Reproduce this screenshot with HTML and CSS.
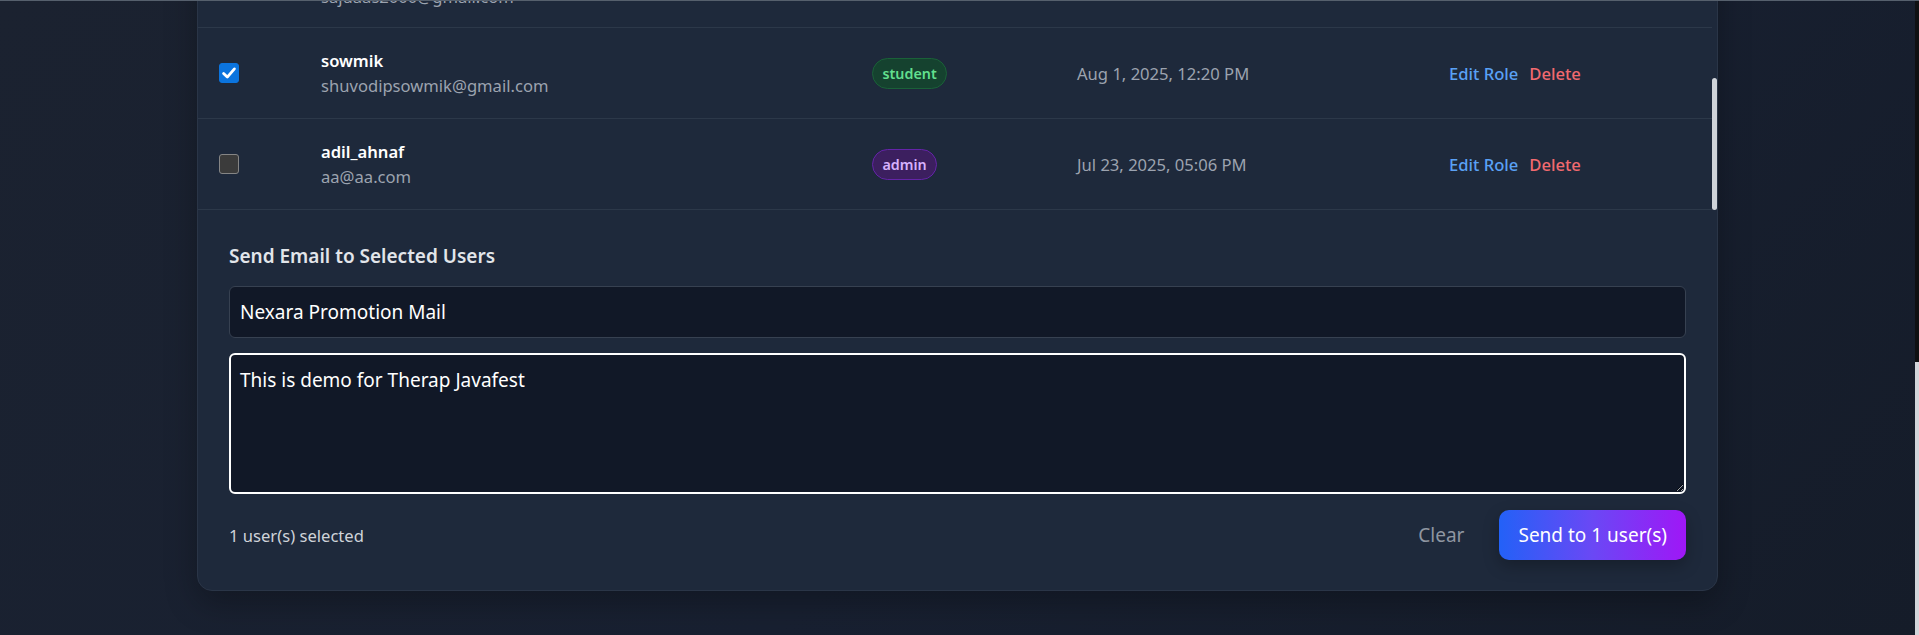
FILE: index.html
```html
<!DOCTYPE html>
<html lang="en">
<head>
<meta charset="utf-8">
<title>Users - Send Email</title>
<link rel="stylesheet" href="styles.css">
</head>
<body>
<div class="page">
  <main class="main">
    <section class="card">
      <div class="table-wrap">
        <div class="rows">
          <div class="row row-cut">
            <div class="cell cell-check"><span class="cb"></span></div>
            <div class="cell user">
              <span class="name">sajidas</span>
              <span class="email">sajuaas2000@gmail.com</span>
            </div>
            <div class="cell"></div>
            <div class="cell"></div>
            <div class="cell"></div>
          </div>
          <div class="row">
            <div class="cell cell-check">
              <span class="cb on"><svg viewBox="0 0 20 20" width="20" height="20"><path d="M4.6 10.4 L8.3 14.1 L15.4 5.9" fill="none" stroke="#fff" stroke-width="2.8" stroke-linecap="round" stroke-linejoin="round"/></svg></span>
            </div>
            <div class="cell user">
              <span class="name">sowmik</span>
              <span class="email">shuvodipsowmik@gmail.com</span>
            </div>
            <div class="cell"><span class="badge student">student</span></div>
            <div class="cell date">Aug 1, 2025, 12:20 PM</div>
            <div class="cell acts"><a class="edit">Edit Role</a><a class="del">Delete</a></div>
          </div>
          <div class="row">
            <div class="cell cell-check"><span class="cb"></span></div>
            <div class="cell user">
              <span class="name">adil_ahnaf</span>
              <span class="email">aa@aa.com</span>
            </div>
            <div class="cell"><span class="badge admin">admin</span></div>
            <div class="cell date">Jul 23, 2025, 05:06 PM</div>
            <div class="cell acts"><a class="edit">Edit Role</a><a class="del">Delete</a></div>
          </div>
        </div>
        <div class="vscroll"><div class="vthumb"></div></div>
      </div>

      <div class="mailer">
        <h3 class="mailer-title">Send Email to Selected Users</h3>
        <input class="field" type="text" value="Nexara Promotion Mail">
        <textarea class="field area">This is demo for Therap Javafest</textarea>
        <div class="footer">
          <span class="count">1 user(s) selected</span>
          <div class="buttons">
            <button class="btn-clear" type="button">Clear</button>
            <button class="btn-send" type="button">Send to 1 user(s)</button>
          </div>
        </div>
      </div>
    </section>
  </main>
  <div class="page-scroll"><div class="page-thumb"></div></div>
</div>
</body>
</html>
```

FILE: styles.css
```css
* { box-sizing: border-box; }

html, body {
  margin: 0;
  padding: 0;
  height: 635px;
  overflow: hidden;
}

body {
  font-family: "Noto Sans", "Open Sans", "Liberation Sans", sans-serif;
  background: linear-gradient(135deg, #1b2230 0%, #182031 55%, #151c29 100%);
  color: #e5e7eb;
}

.page {
  display: flex;
  height: 635px;
  border-top: 1px solid #56606d;
}

.main {
  flex: 1;
  min-width: 0;
  overflow: hidden;
}

.card {
  width: 1521px;
  margin: -65px auto 0;
  background: #1e293b;
  border: 1px solid #2a3547;
  border-radius: 15px;
  box-shadow: 0 12px 32px rgba(0, 0, 0, 0.28);
}

/* ---------- table ---------- */
.table-wrap {
  display: flex;
}

.rows {
  flex: 1;
  min-width: 0;
}

.row {
  display: grid;
  grid-template-columns: 93px 551px 205px 372px 1fr;
  align-items: center;
  height: 91px;
  border-bottom: 1px solid #2c3849;
}

.row-cut .user {
  padding-top: 3px;
}

.cell {
  padding-left: 30px;
}

.cell-check {
  padding-left: 21px;
  display: flex;
  align-items: center;
}

.cb {
  width: 20px;
  height: 20px;
  border-radius: 3px;
  background: #3b3b3b;
  border: 1.5px solid #858585;
  display: inline-flex;
}

.cb.on {
  background: #0b74de;
  border-color: #0b74de;
  align-items: center;
  justify-content: center;
}

.cb.on svg {
  flex: none;
  margin: -1.5px;
}

.user {
  display: flex;
  flex-direction: column;
}

.name {
  font-size: 16.6px;
  line-height: 25px;
  font-weight: 600;
  color: #ffffff;
}

.email {
  font-size: 16.6px;
  line-height: 25px;
  color: #9ca3af;
}

.badge {
  display: inline-flex;
  align-items: center;
  height: 31px;
  padding: 0 9.5px;
  border-radius: 999px;
  border: 1px solid;
  font-size: 14.3px;
  font-weight: 600;
}

.badge.student {
  background: #15422f;
  border-color: #1a6138;
  color: #62df8e;
}

.badge.admin {
  background: #3c1f5f;
  border-color: #6424a8;
  color: #d6b2fd;
}

.date {
  font-size: 16.6px;
  color: #9ca3af;
}

.acts {
  display: flex;
  gap: 11px;
  font-size: 16.6px;
  font-weight: 500;
}

.edit { color: #5aa1f5; }
.del { color: #f26a6f; }

.vscroll {
  width: 5px;
  display: flex;
  flex-direction: column;
  justify-content: flex-end;
}

.vthumb {
  height: 132px;
  background: #cfd3d9;
  border-radius: 3px;
}

/* ---------- mailer ---------- */
.mailer {
  padding: 32px 31px 30px 31px;
  display: flex;
  flex-direction: column;
}

.mailer-title {
  margin: 0 0 16px;
  font-size: 19px;
  line-height: 28px;
  font-weight: 600;
  color: #e2e5ea;
}

.field {
  display: block;
  width: 100%;
  font-family: inherit;
  font-size: 19px;
  color: #ffffff;
  background: #111827;
  border: 1px solid #374151;
  border-radius: 6px;
  height: 52px;
  padding: 0 10px;
  outline: none;
}

.area {
  margin-top: 15px;
  height: 141px;
  padding: 10px 9px 8px;
  line-height: 30px;
  border: 2px solid #ffffff;
  resize: vertical;
  color-scheme: dark;
}

.footer {
  margin-top: 16px;
  display: flex;
  align-items: center;
  justify-content: space-between;
}

.count {
  font-size: 16.6px;
  color: #cfd3d9;
}

.buttons {
  display: flex;
  align-items: center;
  gap: 15px;
}

.btn-clear {
  font-family: inherit;
  font-size: 19px;
  color: #8f96a1;
  background: none;
  border: 0;
  padding: 0 20px;
  height: 50px;
}

.btn-send {
  font-family: inherit;
  font-size: 19px;
  color: #ffffff;
  background: linear-gradient(90deg, #2361f7 0%, #6a48f5 50%, #9f17f6 100%);
  border: 0;
  border-radius: 10px;
  height: 50px;
  padding: 0 19px;
  box-shadow: 0 6px 16px rgba(0, 0, 0, 0.25);
}

/* ---------- page scrollbar ---------- */
.page-scroll {
  width: 4px;
  flex: none;
  background: #0f1012;
  display: flex;
  flex-direction: column;
  justify-content: flex-end;
}

.page-thumb {
  height: 273px;
  background: #d2d5da;
}
```
